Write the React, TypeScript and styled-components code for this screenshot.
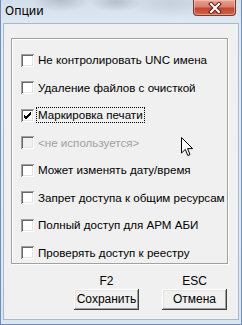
import React from "react";
import styled, { createGlobalStyle } from "styled-components";

const Global = createGlobalStyle`
  html, body { margin: 0; padding: 0; background: #dfe8f3; }
  body { width: 242px; height: 325px; overflow: hidden; }
`;

const Window = styled.div`
  position: relative;
  width: 242px;
  height: 325px;
  box-sizing: border-box;
  display: flex;
  flex-direction: column;
  border: 1px solid #6f8fb8;
  border-top: none;
  background:
    radial-gradient(ellipse 30px 12px at 60px 0px, rgba(120, 130, 140, 0.35), transparent),
    radial-gradient(ellipse 26px 10px at 115px 2px, rgba(110, 120, 130, 0.3), transparent),
    radial-gradient(ellipse 40px 14px at 170px 4px, rgba(150, 160, 170, 0.25), transparent),
    linear-gradient(180deg, #d3deec 0%, #dde7f2 20px, #e5ecf5 60px, #dbe5f1 100%);
`;

const TitleBar = styled.div`
  height: 23px;
  display: flex;
  align-items: flex-start;
  justify-content: space-between;
  padding-left: 4px;
  padding-right: 5px;
`;

const Title = styled.div`
  font-family: "Noto Sans", "Open Sans", sans-serif;
  font-size: 12px;
  line-height: 16px;
  margin-top: 3px;
  color: #000;
`;

const CloseButton = styled.div`
  width: 43px;
  height: 16px;
  box-sizing: border-box;
  border: 1px solid #7a3a30;
  border-top: none;
  border-radius: 0 0 4px 4px;
  background: linear-gradient(180deg, #e8a291 0%, #d98070 45%, #c2452f 55%, #cf664b 100%);
  box-shadow: inset 0 0 0 1px rgba(255, 220, 210, 0.45);
  display: flex;
  align-items: center;
  justify-content: center;
`;

const Client = styled.div`
  flex: 1;
  margin: 0 2px 4px 2px;
  border: 1px solid #a9b9cc;
  background: #f0f0f0;
  display: flex;
  flex-direction: column;
  padding: 14px 10px 0 7px;
  font-family: "Liberation Sans", Arial, sans-serif;
  font-size: 12px;
  color: #000;
`;

const GroupBox = styled.div`
  border: 1px solid #a0a0a0;
  box-shadow: 1px 1px 0 #fff, inset 1px 1px 0 #fff;
  padding: 13px 8px 2px 9px;
  display: flex;
  flex-direction: column;
  gap: 11.57px;
`;

const Row = styled.div<{ $disabled?: boolean }>`
  height: 16px;
  display: flex;
  align-items: center;
  gap: 4px;
  font-size: 11.6px;
  color: ${(p) => (p.$disabled ? "#a0a0a0" : "#000")};
  white-space: nowrap;
`;

const Box = styled.div<{ $disabled?: boolean }>`
  width: 13px;
  height: 13px;
  flex: none;
  background: ${(p) => (p.$disabled ? "#f0f0f0" : "#fff")};
  box-shadow: inset 1px 1px #a0a0a0, inset -1px -1px #fff, inset 2px 2px #696969,
    inset -2px -2px #e3e3e3;
  display: flex;
  align-items: center;
  justify-content: center;
`;

const Label = styled.span<{ $focused?: boolean }>`
  line-height: 14px;
  padding: 0 1px;
  outline: ${(p) => (p.$focused ? "1px dotted #000" : "none")};
  margin-left: -1px;
`;

const Footer = styled.div`
  display: flex;
  justify-content: flex-end;
  gap: 23px;
  padding-right: 1px;
  margin-top: 11px;
`;

const ButtonCol = styled.div`
  display: flex;
  flex-direction: column;
  align-items: center;
  gap: 1px;
`;

const KeyLabel = styled.div`
  line-height: 13px;
`;

const Button = styled.div`
  width: 65px;
  height: 21px;
  box-sizing: border-box;
  display: flex;
  align-items: center;
  justify-content: center;
  background: #f0f0f0;
  box-shadow: inset -1px -1px #404040, inset 1px 1px #fff, inset -2px -2px #a0a0a0,
    inset 2px 2px #e3e3e3;
  padding-bottom: 1px;
`;

const Cursor = styled.svg`
  position: absolute;
  left: 180px;
  top: 137px;
`;

const Check = () => (
  <svg width="9" height="9" viewBox="0 0 9 9">
    <path d="M1 4 L3 6 L8 1 M1 5 L3 7 L8 2 M1 6 L3 8 L8 3" stroke="#000" strokeWidth="1" fill="none" />
  </svg>
);

const items = [
  { t: "Не контролировать UNC имена" },
  { t: "Удаление файлов с очисткой" },
  { t: "Маркировка печати", checked: true, focused: true },
  { t: "<не используется>", disabled: true },
  { t: "Может изменять дату/время" },
  { t: "Запрет доступа к общим ресурсам" },
  { t: "Полный доступ для АРМ АБИ" },
  { t: "Проверять доступ к реестру" },
];

export default function App() {
  return (
    <>
      <Global />
      <Window>
        <TitleBar>
          <Title>Опции</Title>
          <CloseButton>
            <svg width="14" height="12" viewBox="0 0 14 12">
              <path d="M3 2 L11 10 M11 2 L3 10" stroke="#5a2018" strokeWidth="4" strokeLinecap="square" />
              <path d="M3 2 L11 10 M11 2 L3 10" stroke="#fff" strokeWidth="2" strokeLinecap="square" />
            </svg>
          </CloseButton>
        </TitleBar>
        <Client>
          <GroupBox>
            {items.map((it) => (
              <Row key={it.t} $disabled={it.disabled}>
                <Box $disabled={it.disabled}>{it.checked && <Check />}</Box>
                <Label $focused={it.focused}>{it.t}</Label>
              </Row>
            ))}
          </GroupBox>
          <Footer>
            <ButtonCol>
              <KeyLabel>F2</KeyLabel>
              <Button>Сохранить</Button>
            </ButtonCol>
            <ButtonCol>
              <KeyLabel>ESC</KeyLabel>
              <Button>Отмена</Button>
            </ButtonCol>
          </Footer>
        </Client>
        <Cursor width="13" height="20" viewBox="0 0 13 20">
          <path d="M0.5 0.5 L0.5 16 L4.3 12.4 L6.8 18.5 L9 17.6 L6.6 11.6 L11.6 11.6 Z" fill="#fff" stroke="#000" strokeWidth="1" />
        </Cursor>
      </Window>
    </>
  );
}
